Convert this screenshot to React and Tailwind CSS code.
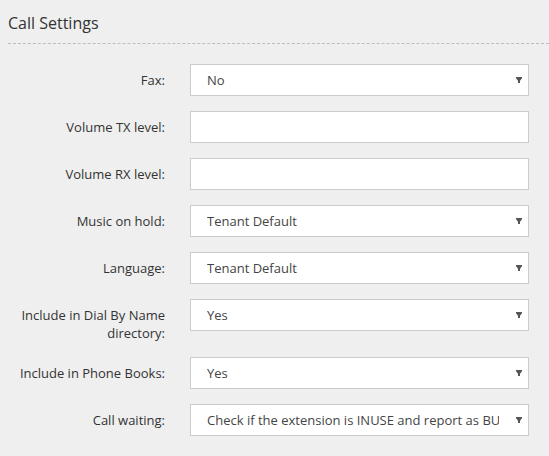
import React from "react";

function Arrow() {
  return (
    <svg width="6" height="6" viewBox="0 0 6 6" className="shrink-0">
      <path d="M0 0 H6 V1.2 L4 3.8 V6 H2 V3.8 L0 1.2 Z" fill="#555" />
    </svg>
  );
}

function SelectBox({ value }) {
  return (
    <div className="flex h-[32px] w-[339px] items-center border border-[#cccccc] bg-white pl-[16px] pr-[6px]">
      <span className="mr-[17px] min-w-0 flex-1 overflow-hidden whitespace-nowrap pt-[2px] text-[13px] text-[#444]">
        {value}
      </span>
      <Arrow />
    </div>
  );
}

function InputBox() {
  return <div className="h-[32px] w-[339px] border border-[#cccccc] bg-white" />;
}

function Row({ label, children }) {
  return (
    <div className="mb-[15px] flex items-start">
      <div className="w-[157px] shrink-0 pt-[8px] text-right text-[13px] leading-[17.5px] text-[#333]">
        {label}
      </div>
      <div className="ml-[25px]">{children}</div>
    </div>
  );
}

export default function App() {
  return (
    <div
      className="min-h-[456px] w-[549px] bg-[#efefef] pl-[8px]"
      style={{ fontFamily: '"Open Sans", "Noto Sans", sans-serif' }}
    >
      <div className="border-b border-dashed border-[#bdbdbd] pb-[9px] pt-[12px] text-[16px] leading-[22px] text-[#333]">
        Call Settings
      </div>
      <div className="pt-[20px]">
        <Row label="Fax:">
          <SelectBox value="No" />
        </Row>
        <Row label="Volume TX level:">
          <InputBox />
        </Row>
        <Row label="Volume RX level:">
          <InputBox />
        </Row>
        <Row label="Music on hold:">
          <SelectBox value="Tenant Default" />
        </Row>
        <Row label="Language:">
          <SelectBox value="Tenant Default" />
        </Row>
        <Row
          label={
            <>
              Include in Dial By Name
              <br />
              directory:
            </>
          }
        >
          <SelectBox value="Yes" />
        </Row>
        <Row label="Include in Phone Books:">
          <SelectBox value="Yes" />
        </Row>
        <Row label="Call waiting:">
          <SelectBox value="Check if the extension is INUSE and report as BUSY" />
        </Row>
      </div>
    </div>
  );
}
